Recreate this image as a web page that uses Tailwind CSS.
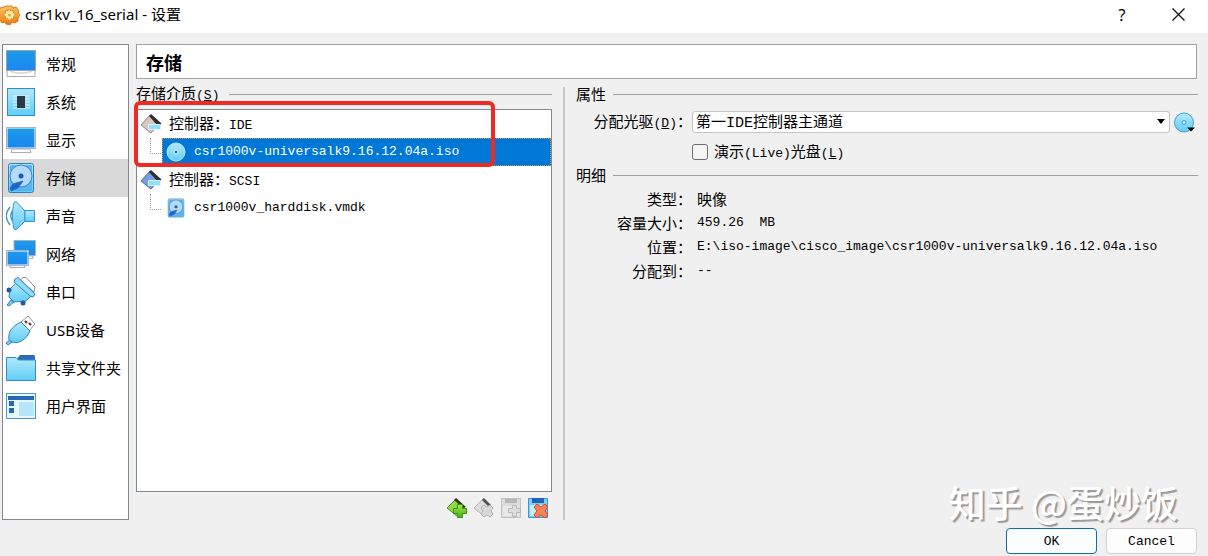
<!DOCTYPE html>
<html lang="zh-CN">

<head>
  <meta charset="utf-8" />
  <meta name="viewport" content="width=device-width, initial-scale=1" />
  <title>csr1kv_16_serial - 设置</title>
  <script src="https://cdn.jsdelivr.net/npm/@tailwindcss/browser@4"></script>
</head>

<body class="bg-[#f0f0f0] text-black min-h-screen flex flex-col relative overflow-hidden font-['Noto_Sans_CJK_SC',sans-serif] text-[15px]">
  <!-- Shared gradients and symbols -->
  <svg class="absolute w-0 h-0" aria-hidden="true">
    <defs>
      <linearGradient id="screen" x1="0" y1="0" x2="0" y2="1">
        <stop offset="0" stop-color="#1c9bea" />
        <stop offset="1" stop-color="#1b86f0" />
      </linearGradient>
      <linearGradient id="sky" x1="0" y1="0" x2="0" y2="1">
        <stop offset="0" stop-color="#b4e8fb" />
        <stop offset="1" stop-color="#5fcdf8" />
      </linearGradient>
      <linearGradient id="gear" x1="0" y1="0" x2="0" y2="1">
        <stop offset="0" stop-color="#f9c860" />
        <stop offset="1" stop-color="#e8760c" />
      </linearGradient>
      <linearGradient id="green" x1="0" y1="0" x2="0" y2="1">
        <stop offset="0" stop-color="#a5e84a" />
        <stop offset="1" stop-color="#46b01e" />
      </linearGradient>
      <symbol id="disk" viewBox="0 0 30 32">
        <rect x="2.5" y="1.500" width="25" height="29" rx="2" fill="url(#sky)" stroke="#2c7fc4" />
        <rect x="4" y="3" width="22" height="26" rx="1" fill="#5ab4ec" />
        <circle cx="15" cy="14" r="11" fill="#b5d9f8" stroke="#3f7fd0" />
        <circle cx="15" cy="14" r="2.500" fill="#1c5cb4" />
        <path d="M17 19 12 26l-7 3-1-3 3-4z" fill="#1f64c0" stroke="#2a70c8" stroke-linejoin="round" />
      </symbol>
    </defs>
  </svg>

  <header class="bg-white h-[33px] shrink-0 flex items-center pr-[18px] pb-1 text-base font-['Noto_Sans','Noto_Sans_CJK_SC',sans-serif]">
    <svg class="w-5 h-5 shrink-0" viewBox="0 0 20 20">
      <path d="M7 1h5l1 2 3-1 3 4-1 2 2 2-2 3v3l-3 2-3-1-2 3-4-1-1-2-3 1-3-4 1-2-2-2 1-4 1-3 4-1z" fill="url(#gear)" stroke="#d77a1c" stroke-linejoin="round" />
      <circle cx="9.500" cy="10" r="6" fill="#f39a2c" />
      <path d="m9.500 4 1.500 2 2.500-.5v2.500l2 2-2 1.500v2.500l-2.500-.5-1.500 2-1.500-2-2.500.5v-2.500l-2-1.500 2-2V5.500L8 6z" fill="#ffe9ac" stroke="#dd821f" stroke-width=".7" />
      <circle cx="9.500" cy="10" r="1.500" fill="#f5a93a" />
    </svg>
    <h1 class="flex-1 ml-[5px] text-[15px]">csr1kv_16_serial - 设置</h1>
    <button type="button" aria-label="帮助" class="w-6 mr-8">?</button>
    <button type="button" aria-label="关闭" class="w-6 h-6 flex items-center justify-center">
      <svg class="w-[13px] h-[13px] shrink-0" viewBox="0 0 13 13" fill="none" stroke="#111" stroke-width="1.300">
        <path d="m.5.5 12 12m0-12-12 12" />
      </svg>
    </button>
  </header>

  <div class="flex-1 flex gap-[7px] pt-[11px] pl-[2px] pr-[10px]">
    <!-- Categories -->
    <nav class="w-[127px] shrink-0 bg-white border border-[#828790] font-['Noto_Sans','Noto_Sans_CJK_SC',sans-serif]">
      <a href="#general" class="flex items-center h-[38px] pl-[3px] gap-[10px]">
        <svg class="w-[30px] h-8" viewBox="0 0 30 32">
          <path d="M1 22h28v6.500H1z" fill="#fff" stroke="#a8adb3" />
          <path d="M5 22v2h4l1 1h10l1-1h4v-2" fill="#fff" stroke="#b9bdc2" />
          <rect x=".5" y="2.500" width="29" height="20" fill="url(#screen)" stroke="#9aa6b0" />
        </svg>
        常规
      </a>
      <a href="#system" class="flex items-center h-[38px] pl-[3px] gap-[10px]">
        <svg class="w-[30px] h-8" viewBox="0 0 30 32">
          <rect x="1.500" y="2.500" width="27" height="27" fill="url(#sky)" stroke="#2d8fce" />
          <path d="M7 10h17M7 13h17M7 16h17M7 19h17M7 22h17" stroke="#e3f6fe" />
          <rect x="11" y="10" width="8" height="12" fill="#2b3947" />
        </svg>
        系统
      </a>
      <a href="#display" class="flex items-center h-[38px] pl-[3px] gap-[10px]">
        <svg class="w-[30px] h-8" viewBox="0 0 30 32">
          <path d="M6 25h18l1 3.500H5z" fill="#fff" stroke="#a8adb3" />
          <rect x=".5" y="3.500" width="29" height="21" fill="#fff" stroke="#a8b4be" />
          <rect x="1.500" y="4.500" width="27" height="19" fill="url(#screen)" />
        </svg>
        显示
      </a>
      <a href="#storage" aria-current="page" class="flex items-center h-[38px] pl-[3px] gap-[10px] bg-[#d9d9d9]">
        <svg class="w-[30px] h-8"><use href="#disk" /></svg>
        存储
      </a>
      <a href="#audio" class="flex items-center h-[38px] pl-[3px] gap-[10px]">
        <svg class="w-[30px] h-8" viewBox="0 0 30 32" stroke="#3a92c8">
          <path d="M4 7c-5 6-5 12 0 18M7 10c-3 4-3 8 0 12" fill="none" stroke-width="1.300" />
          <path d="M8 2.500c2-1.500 3-.5 4 1l7 7.500v10l-7 7c-1 1.500-3 2.500-4 1-2-8-2-18 0-26.500z" fill="url(#sky)" />
          <path d="M19 10.500h9.500v11H19z" fill="url(#sky)" />
        </svg>
        声音
      </a>
      <a href="#network" class="flex items-center h-[38px] pl-[3px] gap-[10px]">
        <svg class="w-[30px] h-8" viewBox="0 0 30 32">
          <rect x="8" y="2.500" width="21.500" height="15" fill="url(#screen)" stroke="#a8b4be" />
          <path d="M22 18h5v2.500h-5z" fill="#fff" stroke="#a8adb3" />
          <path d="M5 27h13l1 2.500H4z" fill="#fff" stroke="#a8adb3" />
          <rect x=".5" y="12.500" width="22" height="15" fill="#fff" stroke="#a8b4be" />
          <rect x="1.500" y="13.500" width="20" height="13" fill="url(#screen)" />
        </svg>
        网络
      </a>
      <a href="#serial" class="flex items-center h-[38px] pl-[3px] gap-[10px]">
        <svg class="w-[30px] h-8" viewBox="0 0 30 32" stroke="#2f82c0" stroke-linejoin="round">
          <path d="m14 4 3-2.500h3L29 11l-1 5z" fill="#fff" stroke="#8a8a8a" />
          <path d="m5 24-4 5 2 1 5-4z" fill="#7cccf2" />
          <path d="m4 13 6-6 15 13-5 5-12 1-5-5z" fill="url(#sky)" />
          <path d="m9 3 3-1.500L29 18l-2 3-3-1L8 6z" fill="#91daf8" />
          <circle cx="3" cy="14" r="2.500" fill="#23599f" stroke="none" />
          <circle cx="17" cy="27" r="2.500" fill="#23599f" stroke="none" />
        </svg>
        串口
      </a>
      <a href="#usb" class="flex items-center h-[38px] pl-[3px] gap-[10px]">
        <svg class="w-[30px] h-8" viewBox="0 0 30 32" stroke-linejoin="round">
          <path d="m15 8 7-6 7 8-6 7z" fill="#fff" stroke="#909090" />
          <path d="m19 7 2 2m2 0 2 2" stroke="#7b2d2d" stroke-width="2.200" />
          <path d="m4 26-4 3 2 2 4-3z" fill="#7cccf2" stroke="#2f82c0" />
          <path d="M3 26c-1-8 2-13 12-18l9 9c-4 9-11 13-18 11z" fill="url(#sky)" stroke="#2f82c0" />
        </svg>
        USB设备
      </a>
      <a href="#shared" class="flex items-center h-[38px] pl-[3px] gap-[10px]">
        <svg class="w-[30px] h-8" viewBox="0 0 30 32">
          <path d="M11 6.500 14 3h14l1 1v4H11z" fill="#2b6cb8" />
          <path d="M.5 5.500H10L12.500 8h17v20.500H.5z" fill="url(#sky)" stroke="#2d8fce" />
        </svg>
        共享文件夹
      </a>
      <a href="#ui" class="flex items-center h-[38px] pl-[3px] gap-[10px]">
        <svg class="w-[30px] h-8" viewBox="0 0 30 32">
          <rect x=".5" y="3.500" width="29" height="25" fill="#e6f7fe" stroke="#4a9ad0" />
          <path d="M2 6h26v4H2zM3 11h5v5H3zM3 18h5v5H3z" fill="#2867b6" />
          <path d="M13 12h15v14H13z" fill="#b5e6fb" />
        </svg>
        用户界面
      </a>
    </nav>

    <main class="flex-1 min-w-0 flex flex-col">
      <h2 class="h-[35px] shrink-0 mr-px flex items-center bg-white border border-[#a0a0a0] pl-[9px] text-lg leading-none font-bold">存储</h2>

      <div class="flex-1 flex pt-[3px]">
        <!-- Storage devices -->
        <section class="w-[416px] shrink-0 flex flex-col">
          <h3 class="h-6 flex items-center gap-[10px] mb-[3px] after:flex-1 after:h-px after:bg-[#a0a0a0]">
            <span>存储介质<span class="font-['Liberation_Mono',monospace] text-[13px]">(<u>S</u>)</span></span>
          </h3>
          <div class="relative flex-1 bg-white border border-[#828790]">
            <ul>
              <li>
                <div class="h-7 flex items-center gap-[7px] pl-1">
                  <svg class="w-[21px] h-5" viewBox="0 0 21 20">
                    <path d="M0 11 9 1l9 9-8 9z" fill="#d9c6bf" stroke="#8f8280" />
                    <path d="m8 2 2-2 10 9v2l-3 1z" fill="#2f2f33" />
                    <path d="M7.500 10.500h12v5h-12z" fill="#8fe0fb" stroke="#d8f3fd" />
                  </svg>
                  <span>控制器：<span class="font-['Liberation_Mono',monospace] text-[13px]">IDE</span></span>
                </div>
                <div class="h-7 flex">
                  <span class="w-[11px] h-4 ml-[13px] border-l border-b border-dotted border-[#a0a0a0]"></span>
                  <span class="flex-1 ml-px flex items-center gap-2 pl-[3px] bg-[#0078d7] text-white font-['Liberation_Mono',monospace] text-[13px] border border-dotted border-[#e08a3c]">
                    <svg class="w-5 h-5" viewBox="0 0 20 20">
                      <circle cx="10" cy="10" r="9" fill="url(#sky)" stroke="#bdeafb" />
                      <circle cx="10" cy="10" r="2" fill="#176cae" stroke="#eefaff" />
                    </svg>
                    csr1000v-universalk9.16.12.04a.iso
                  </span>
                </div>
              </li>
              <li>
                <div class="h-7 flex items-center gap-[7px] pl-1">
                  <svg class="w-[21px] h-5" viewBox="0 0 21 20">
                    <path d="M0 11 9 1l9 9-8 9z" fill="#749fe2" stroke="#4e6694" />
                    <path d="m8 2 2-2 10 9v2l-3 1z" fill="#2f2f33" />
                    <path d="M7.500 10.500h12v5h-12z" fill="#8fe0fb" stroke="#d8f3fd" />
                  </svg>
                  <span>控制器：<span class="font-['Liberation_Mono',monospace] text-[13px]">SCSI</span></span>
                </div>
                <div class="h-7 flex">
                  <span class="w-[11px] h-4 ml-[13px] border-l border-b border-dotted border-[#a0a0a0]"></span>
                  <span class="flex-1 ml-px flex items-center gap-2 pl-[3px] font-['Liberation_Mono',monospace] text-[13px] border border-transparent">
                    <svg class="w-5 h-5"><use href="#disk" /></svg>
                    csr1000v_harddisk.vmdk
                  </span>
                </div>
              </li>
            </ul>
            <!-- Highlight frame -->
            <div class="absolute -left-[3px] -top-[9px] w-[361px] h-[66px] border-4 border-[#ee2a24] rounded-md pointer-events-none"></div>
          </div>
          <div class="h-7 flex items-center justify-end gap-[7px] pt-[3px] pr-1">
            <button type="button" aria-label="添加控制器">
              <svg class="block w-5 h-5" viewBox="0 0 20 20">
                <path d="M0 10 9 1l9 8-8 9z" fill="#8fd843" stroke="#4f9a22" />
                <path d="m7 2 2-2 10 9-3 1z" fill="#33372b" />
                <path d="M10.500 6.500h5v4h4v5h-4v4h-5v-4h-4v-5h4z" fill="url(#green)" stroke="#37931a" />
              </svg>
            </button>
            <button type="button" aria-label="删除控制器" disabled>
              <svg class="block w-5 h-5" viewBox="0 0 20 20">
                <path d="M0 10 9 1l9 8-8 9z" fill="#ddd" stroke="#b5b5b5" />
                <path d="m8 2 2-2 7 7-3 1z" fill="#505050" />
                <path d="m10 7 3 2 3-2 3 3-2 3 2 3-3 3-3-2-3 2-3-3 2-3-2-3z" fill="#d8d8d8" stroke="#b0b0b0" />
              </svg>
            </button>
            <button type="button" aria-label="添加虚拟介质" disabled>
              <svg class="block w-5 h-5" viewBox="0 0 20 20">
                <path d="M.5.500h19v19H.5z" fill="#dcdcdc" stroke="#c0c0c0" />
                <path d="M4 1h12v4H4z" fill="#b7b7b7" />
                <path d="M2 8h16v10H2z" fill="#e8e8e8" />
                <path d="M11.500 7.500h4v3h4v4h-4v4h-4v-4h-4v-4h4z" fill="#ddd" stroke="#b8b8b8" />
              </svg>
            </button>
            <button type="button" aria-label="删除虚拟介质">
              <svg class="block w-5 h-5" viewBox="0 0 20 20">
                <path d="M.5.500h19v19H.5z" fill="#7ecdf8" stroke="#3d93d5" />
                <path d="M4 0h12v5H4z" fill="#2264b8" />
                <path d="M2 7h16v11H2z" fill="#c5eafc" />
                <path d="m9 6 4 3 4-3 3 3-3 4 3 4-3 3-4-3-4 3-3-3 3-4-3-4z" fill="#f58358" stroke="#cc4f2c" stroke-linejoin="round" />
              </svg>
            </button>
          </div>
        </section>

        <div class="w-[2px] shrink-0 mt-[5px] ml-[11px] mr-[11px] bg-[#c8c8c8]"></div>

        <!-- Attributes -->
        <section class="flex-1 min-w-0">
          <h3 class="h-6 flex items-center gap-[7px] after:flex-1 after:h-px after:bg-[#a0a0a0]">属性</h3>
          <div class="grid grid-cols-[116px_1fr] items-center pt-1">
            <label for="drive" class="text-right whitespace-nowrap">分配光驱<span class="font-['Liberation_Mono',monospace] text-[13px]">(<u>D</u>)</span>：</label>
            <div class="flex items-center gap-1 h-6 pr-[3px]">
              <div class="relative flex-1">
                <select id="drive" class="block w-full h-[22px] appearance-none bg-white border border-[#c4c4c4] rounded-[3px] pl-[3px] pt-[2px] leading-5 font-['Liberation_Mono','Noto_Sans_CJK_SC',monospace]">
                  <option>第一IDE控制器主通道</option>
                </select>
                <svg class="absolute right-[5px] top-2 w-2 h-[5px] pointer-events-none" viewBox="0 0 8 5"><path d="M0 0h8L4 5z" /></svg>
              </div>
              <button type="button" aria-label="选择虚拟盘">
                <svg class="block w-[21px] h-[21px]" viewBox="0 0 21 21">
                  <circle cx="10" cy="10.500" r="9.500" fill="url(#sky)" stroke="#3e9fd2" />
                  <circle cx="10" cy="10.500" r="2" fill="#c7effd" stroke="#3e9fd2" />
                  <path d="M13 15.500h8l-4 4z" />
                </svg>
              </button>
            </div>
            <div class="col-start-2 flex items-center gap-[6px] h-9">
              <input id="live" type="checkbox" class="appearance-none w-4 h-4 border border-[#6e6e6e] rounded-[3px] bg-[#f6f6f6]" />
              <label for="live">演示<span class="font-['Liberation_Mono',monospace] text-[13px]">(Live)</span>光盘<span class="font-['Liberation_Mono',monospace] text-[13px]">(<u>L</u>)</span></label>
            </div>
          </div>

          <h3 class="h-6 -mt-[7px] flex items-center gap-[7px] after:flex-1 after:h-px after:bg-[#a0a0a0]">明细</h3>
          <dl class="grid grid-cols-[116px_1fr] leading-6 [&>dt]:text-right [&>dd]:pl-[5px]">
            <dt>类型：</dt>
            <dd>映像</dd>
            <dt>容量大小：</dt>
            <dd class="font-['Liberation_Mono',monospace] text-[13px] leading-6 whitespace-pre">459.26  MB</dd>
            <dt>位置：</dt>
            <dd class="font-['Liberation_Mono',monospace] text-[13px] leading-6 whitespace-nowrap">E:\iso-image\cisco_image\csr1000v-universalk9.16.12.04a.iso</dd>
            <dt>分配到：</dt>
            <dd class="font-['Liberation_Mono',monospace] text-[13px] leading-6">--</dd>
          </dl>
        </section>
      </div>
    </main>
  </div>

  <footer class="flex justify-end gap-[9px] pt-2 pb-[2px] pr-[11px] font-['Liberation_Mono',monospace] text-[13px]">
    <button type="button" class="w-[91px] h-[26px] pt-[2px] bg-[#fbfdff] border border-[#0f6cae] rounded">OK</button>
    <button type="button" class="w-[91px] h-[26px] pt-[2px] bg-[#fdfdfd] border border-[#d0d0d0] rounded">Cancel</button>
  </footer>

  <!-- Watermark -->
  <div class="absolute right-[30px] bottom-[30px] text-[37px] leading-12 text-white font-medium pointer-events-none whitespace-nowrap [text-shadow:2px_2px_1px_#999]">知乎 @蛋炒饭</div>
</body>

</html>
